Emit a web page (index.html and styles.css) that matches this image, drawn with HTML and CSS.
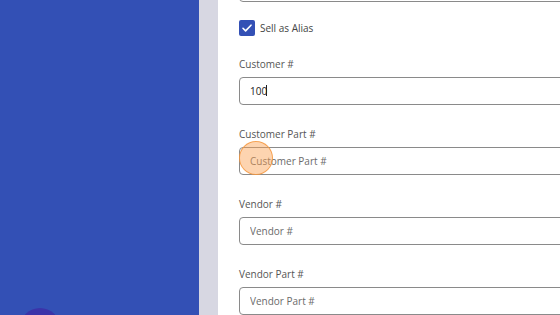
FILE: index.html
```html
<!DOCTYPE html>
<html lang="en">
<head>
    <meta charset="UTF-8">
    <title>Item Alias</title>
    <link rel="stylesheet" href="styles.css">
</head>
<body>
    <div class="layout">
        <aside class="sidebar">
            <span class="fab"></span>
        </aside>
        <div class="gutter"></div>
        <main class="panel">
            <form class="alias-form">
                <input type="text" class="field-input prev-input">

                <label class="check-row">
                    <span class="check-box">
                        <svg width="12" height="12" viewBox="0 0 12 12"><path d="M2 6.3l2.6 2.6L10 3.2" fill="none" stroke="#fff" stroke-width="1.6" stroke-linecap="round" stroke-linejoin="round"/></svg>
                    </span>
                    <span>Sell as Alias</span>
                </label>

                <div class="field">
                    <label for="customer">Customer #</label>
                    <input type="text" id="customer" class="field-input" value="100">
                    <span class="caret"></span>
                </div>

                <div class="field">
                    <label for="customerPart">Customer Part #</label>
                    <input type="text" id="customerPart" class="field-input" placeholder="Customer Part #">
                    <span class="click-marker"></span>
                </div>

                <div class="field">
                    <label for="vendor">Vendor #</label>
                    <input type="text" id="vendor" class="field-input" placeholder="Vendor #">
                </div>

                <div class="field">
                    <label for="vendorPart">Vendor Part #</label>
                    <input type="text" id="vendorPart" class="field-input" placeholder="Vendor Part #">
                </div>
            </form>
        </main>
    </div>
</body>
</html>
```

FILE: styles.css
```css
body {
    margin: 0;
    font-family: 'Open Sans', 'Noto Sans', sans-serif;
    color: #333;
    overflow: hidden;
}
.layout {
    display: flex;
    height: 315px;
}
.sidebar {
    position: relative;
    width: 199px;
    flex-shrink: 0;
    background-color: #3350b5;
    overflow: hidden;
}
.fab {
    position: absolute;
    left: 20px;
    top: 308px;
    width: 40px;
    height: 40px;
    border-radius: 50%;
    background-color: #3b33a9;
}
.gutter {
    width: 19px;
    flex-shrink: 0;
    background-color: #d7d7e2;
}
.panel {
    flex: 1;
    background-color: #ffffff;
    padding-left: 21px;
    overflow: hidden;
}
.alias-form {
    width: 420px;
    margin-top: -26px;
}
.field-input {
    display: block;
    width: 100%;
    height: 28px;
    padding: 0 10px;
    border: 1px solid #8a8a8a;
    border-radius: 4px;
    box-sizing: border-box;
    font-family: inherit;
    font-size: 10px;
    color: #222;
    outline: none;
}
.field-input::placeholder {
    color: #6b6b6b;
}
.check-row {
    display: flex;
    align-items: center;
    gap: 5px;
    margin-top: 18px;
    height: 16px;
    font-size: 10px;
    color: #444;
}
.check-box {
    display: flex;
    align-items: center;
    justify-content: center;
    width: 16px;
    height: 16px;
    border-radius: 2px;
    background-color: #3350b5;
}
.field {
    position: relative;
    margin-top: 21px;
}
.field + .field {
    margin-top: 22px;
}
.field label {
    display: block;
    height: 14px;
    line-height: 14px;
    margin-bottom: 6px;
    font-size: 10px;
    color: #555;
}
.caret {
    position: absolute;
    left: 27px;
    top: 28px;
    width: 1px;
    height: 11px;
    background-color: #222;
}
.click-marker {
    position: absolute;
    left: 0;
    top: 14px;
    width: 32px;
    height: 32px;
    border-radius: 50%;
    border: 1px solid rgba(245, 150, 60, 0.8);
    background-color: rgba(250, 160, 80, 0.45);
}
```
